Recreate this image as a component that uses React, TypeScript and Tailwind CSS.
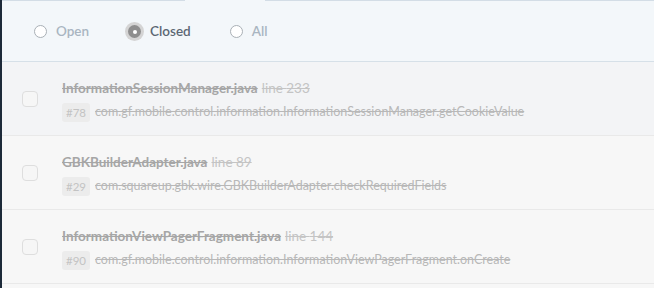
import React from "react";

type Issue = {
  id: number;
  file: string;
  line: number;
  method: string;
};

const issues: Issue[] = [
  {
    id: 78,
    file: "InformationSessionManager.java",
    line: 233,
    method: "com.gf.mobile.control.information.InformationSessionManager.getCookieValue",
  },
  {
    id: 29,
    file: "GBKBuilderAdapter.java",
    line: 89,
    method: "com.squareup.gbk.wire.GBKBuilderAdapter.checkRequiredFields",
  },
  {
    id: 90,
    file: "InformationViewPagerFragment.java",
    line: 144,
    method: "com.gf.mobile.control.information.InformationViewPagerFragment.onCreate",
  },
];

function Radio({ label, checked }: { label: string; checked?: boolean }) {
  return (
    <label className="flex items-center gap-[6px]">
      <span className="flex h-[19px] w-[19px] items-center justify-center">
        {checked ? (
          <span className="flex h-[19px] w-[19px] items-center justify-center rounded-full bg-[#d4d4d4]">
            <span className="flex h-[13px] w-[13px] items-center justify-center rounded-full bg-[#8e8e8e]">
              <span className="h-[4px] w-[4px] rounded-full bg-white" />
            </span>
          </span>
        ) : (
          <span className="h-[13px] w-[13px] rounded-full border border-[#a9b0b6] bg-white" />
        )}
      </span>
      <span
        className={
          checked
            ? "text-[13.5px] font-semibold text-[#5c6773]"
            : "text-[13.5px] font-semibold text-[#a9b5c1]"
        }
      >
        {label}
      </span>
    </label>
  );
}

export default function App() {
  return (
    <div
      className="flex h-[288px] w-[654px] overflow-hidden bg-[#f7f7f7]"
      style={{ fontFamily: "Lato, 'Noto Sans', sans-serif" }}
    >
      <div className="w-[2px] shrink-0 bg-[#1d2a39]" />
      <div className="flex flex-1 flex-col">
        {/* 상단 필터 */}
        <div className="flex h-[62px] flex-col border-b border-[#d6e0e8] bg-[#f3f7fa]">
          <div className="flex h-px">
            <div className="w-[183px] bg-[#d3dde6]" />
            <div className="w-[80px]" />
            <div className="flex-1 bg-[#d3dde6]" />
          </div>
          <div className="flex flex-1 items-center gap-[36px] pl-[29px] pt-[1px]">
            <Radio label="Open" />
            <Radio label="Closed" checked />
            <Radio label="All" />
          </div>
        </div>
        {/* 이슈 목록 */}
        {issues.map((issue, i) => (
          <div
            key={issue.id}
            className={
              i === 0
                ? "flex h-[74px] items-center border-b border-[#e9e9e9] bg-[#f3f4f6]"
                : "flex h-[74px] items-center border-b border-[#e9e9e9] bg-[#f7f7f7]"
            }
          >
            <div className="ml-[20px] h-[16px] w-[16px] rounded-[4px] border border-[#dedede] bg-[#f6f6f6]" />
            <div className="ml-[24px] flex flex-col gap-[6px] pt-[4px]">
              <div className="flex items-baseline gap-[4px] leading-[17px]">
                <span className="text-[13.5px] font-bold text-[#a6a6a6] line-through">
                  {issue.file}
                </span>
                <span className="text-[13.5px] text-[#c4c4c4] line-through">
                  line {issue.line}
                </span>
              </div>
              <div className="flex items-center gap-[5px]">
                <span className="rounded-[3px] bg-[#ececec] px-[4px] text-[11.5px] leading-[19px] text-[#c3c3c3]">
                  #{issue.id}
                </span>
                <span className="text-[12.5px] text-[#b8b8b8] line-through">
                  {issue.method}
                </span>
              </div>
            </div>
          </div>
        ))}
      </div>
    </div>
  );
}
